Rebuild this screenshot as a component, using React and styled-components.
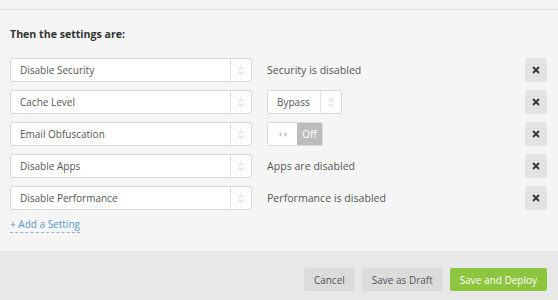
import React from "react";
import styled, { createGlobalStyle } from "styled-components";

const Global = createGlobalStyle`
  html, body { margin: 0; padding: 0; }
  body {
    background: #f5f5f5;
    font-family: "Open Sans", "Liberation Sans", sans-serif;
    color: #444;
    width: 558px;
    height: 300px;
    overflow: hidden;
  }
`;

const Page = styled.div`
  display: flex;
  flex-direction: column;
  height: 300px;
`;

const TopStrip = styled.div`
  height: 9px;
  background: #f3f3f3;
  border-bottom: 1px solid #dedede;
`;

const Content = styled.div`
  flex: 1;
  padding: 16px 11px 0 10px;
`;

const Heading = styled.h3`
  margin: 0 0 16px;
  font-size: 10.6px;
  font-weight: 700;
  line-height: 16px;
  color: #333;
`;

const Rows = styled.div`
  display: flex;
  flex-direction: column;
  gap: 8px;
`;

const Row = styled.div`
  display: grid;
  grid-template-columns: 242px 1fr 22px;
  column-gap: 15px;
  align-items: center;
  height: 24px;
`;

const SelectBox = styled.div`
  display: flex;
  align-items: stretch;
  width: ${(p) => p.$w}px;
  height: 24px;
  box-sizing: border-box;
  background: #fff;
  border: 1px solid #d9d9d9;
  border-radius: 2px;
`;

const SelectText = styled.div`
  flex: 1;
  display: flex;
  align-items: center;
  padding-left: ${(p) => p.$pad}px;
  font-size: 10px;
  color: #555;
  white-space: nowrap;
`;

const ArrowCell = styled.div`
  width: 20px;
  border-left: 1px solid #e3e3e3;
  display: flex;
  align-items: center;
  justify-content: center;
`;

const ValueText = styled.div`
  font-size: 10.6px;
  color: #555;
`;

const RemoveButton = styled.button`
  width: 22px;
  height: 24px;
  padding: 0;
  border: none;
  border-radius: 2px;
  background: #e3e3e3;
  display: flex;
  align-items: center;
  justify-content: center;
  cursor: pointer;
`;

const Toggle = styled.div`
  display: flex;
  width: 56px;
  height: 24px;
  box-sizing: border-box;
  border: 1px solid #dcdcdc;
  border-radius: 2px;
  background: #fff;
  overflow: hidden;
`;

const ToggleHandle = styled.div`
  width: 29px;
  display: flex;
  align-items: center;
  justify-content: center;
`;

const ToggleState = styled.div`
  flex: 1;
  background: #bcbcbc;
  color: #fff;
  font-size: 10px;
  display: flex;
  align-items: center;
  justify-content: center;
`;

const AddLink = styled.a`
  display: inline-block;
  margin-top: 7px;
  font-size: 10px;
  line-height: 14px;
  color: #5b97c9;
  text-decoration: none;
  border-bottom: 1px dashed #8db5d8;
  padding-bottom: 1px;
`;

const Footer = styled.div`
  height: 49px;
  box-sizing: border-box;
  background: #e8e8e8;
  display: flex;
  justify-content: flex-end;
  align-items: flex-start;
  padding: 17px 11px 0 0;
  gap: 7px;
`;

const Button = styled.button`
  height: 23px;
  padding: 0 ${(p) => p.$px}px;
  border: none;
  border-radius: 2px;
  font-family: "Open Sans", "Liberation Sans", sans-serif;
  font-size: 10px;
  background: ${(p) => (p.$primary ? "#8cc63e" : "#dcdcdc")};
  color: ${(p) => (p.$primary ? "#fff" : "#555")};
  cursor: pointer;
`;

const Updown = () => (
  <svg width="6" height="9" viewBox="0 0 6 9">
    <path d="M1 3.2 L3 1.2 L5 3.2" fill="none" stroke="#c8c8c8" strokeWidth="1" />
    <path d="M1 5.8 L3 7.8 L5 5.8" fill="none" stroke="#c8c8c8" strokeWidth="1" />
  </svg>
);

const Cross = () => (
  <svg width="8" height="8" viewBox="0 0 8 8">
    <path d="M1 1 L7 7 M7 1 L1 7" stroke="#333" strokeWidth="1.8" />
  </svg>
);

const LeftRight = () => (
  <svg width="10" height="7" viewBox="0 0 10 7">
    <path d="M3.4 0.8 L1 3.5 L3.4 6.2 Z" fill="#bdbdbd" />
    <path d="M6.6 0.8 L9 3.5 L6.6 6.2 Z" fill="#bdbdbd" />
  </svg>
);

const Select = ({ label, width = 242, pad = 9 }) => (
  <SelectBox $w={width}>
    <SelectText $pad={pad}>{label}</SelectText>
    <ArrowCell>
      <Updown />
    </ArrowCell>
  </SelectBox>
);

const settings = [
  { name: "Disable Security", value: <ValueText>Security is disabled</ValueText> },
  { name: "Cache Level", value: <Select label="Bypass" width={75} pad={9} /> },
  {
    name: "Email Obfuscation",
    value: (
      <Toggle>
        <ToggleHandle>
          <LeftRight />
        </ToggleHandle>
        <ToggleState>Off</ToggleState>
      </Toggle>
    ),
  },
  { name: "Disable Apps", value: <ValueText>Apps are disabled</ValueText> },
  { name: "Disable Performance", value: <ValueText>Performance is disabled</ValueText> },
];

export default function App() {
  return (
    <>
      <Global />
      <Page>
        <TopStrip />
        <Content>
          <Heading>Then the settings are:</Heading>
          <Rows>
            {settings.map((s) => (
              <Row key={s.name}>
                <Select label={s.name} />
                <div>{s.value}</div>
                <RemoveButton aria-label="Remove">
                  <Cross />
                </RemoveButton>
              </Row>
            ))}
          </Rows>
          <AddLink href="#">+ Add a Setting</AddLink>
        </Content>
        <Footer>
          <Button $px={10}>Cancel</Button>
          <Button $px={10}>Save as Draft</Button>
          <Button $px={10} $primary>Save and Deploy</Button>
        </Footer>
      </Page>
    </>
  );
}
